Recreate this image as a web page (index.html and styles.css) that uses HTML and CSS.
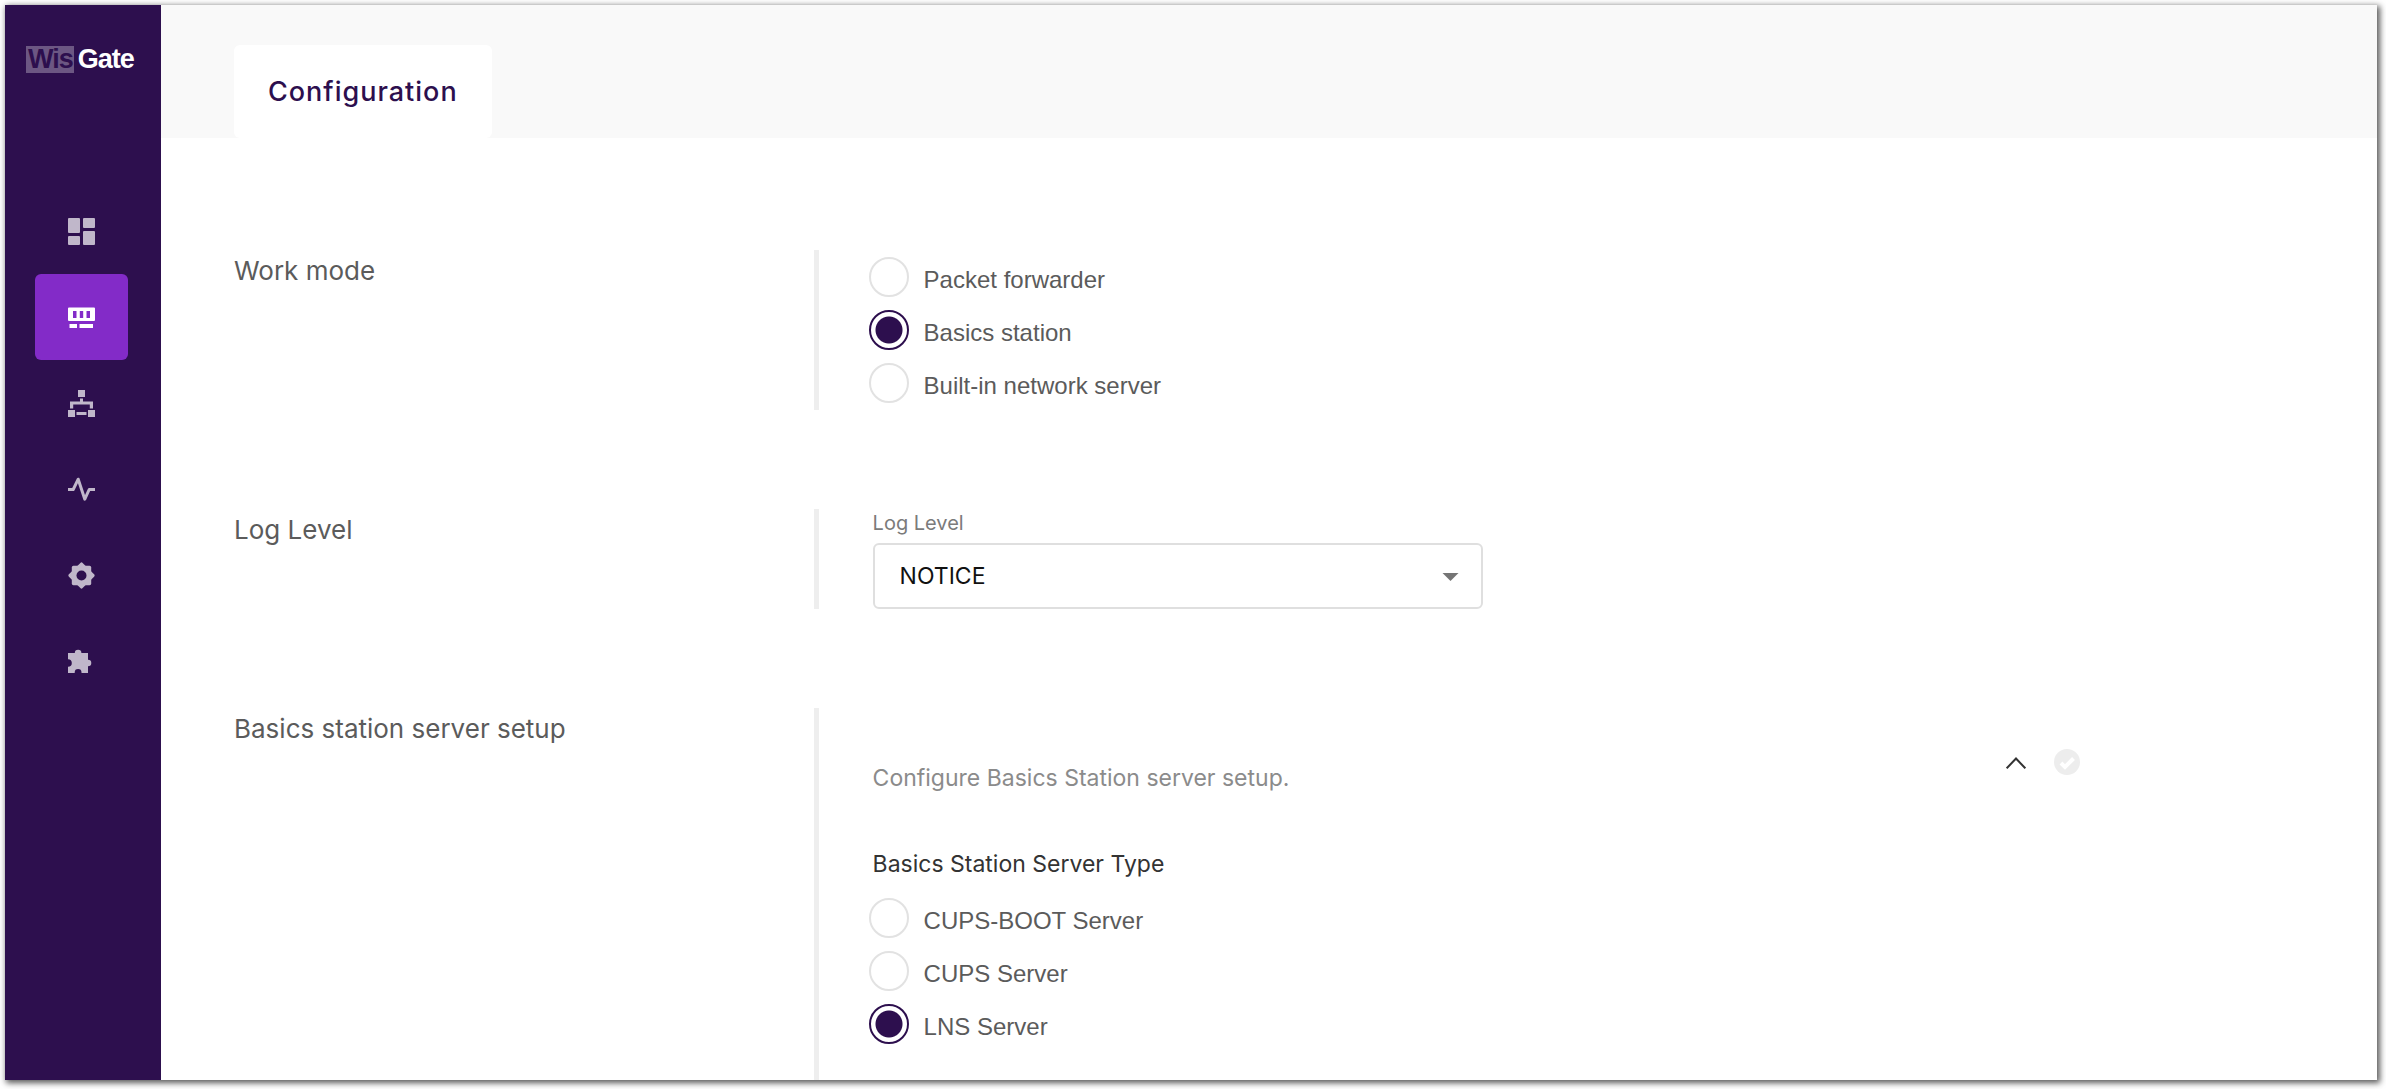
FILE: index.html
```html
<!DOCTYPE html>
<html lang="en">
<head>
<meta charset="utf-8">
<title>WisGate - Configuration</title>
<link rel="stylesheet" href="styles.css">
</head>
<body>
<div class="window">
  <aside class="sidebar">
    <a class="logo" href="#"><span class="logo-wis">Wis</span><span class="logo-gate">Gate</span></a>
    <nav class="nav" aria-label="Main">
      <a class="nav-item" href="#" aria-label="Dashboard">
        <svg class="icon" viewBox="0 0 27 27"><rect width="12" height="15" rx="1"/><rect y="18" width="12" height="9" rx="1"/><rect x="15" width="12" height="10" rx="1"/><rect x="15" y="13" width="12" height="14" rx="1"/></svg>
      </a>
      <a class="nav-item nav-item-active" href="#" aria-label="LoRa network" aria-current="page">
        <svg class="icon" viewBox="0 0 27 27"><path fill-rule="evenodd" d="M1 3.500H26a1 1 0 0 1 1 1V16a1 1 0 0 1-1 1H1a1 1 0 0 1-1-1V4.500a1 1 0 0 1 1-1zM5 7v7h3.500V7zM11.800 7v7h3.400V7zM18.500 7v7H22V7z"/><rect x="1.500" y="20" width="7.500" height="4"/><rect x="11.500" y="20" width="13.500" height="4"/></svg>
      </a>
      <a class="nav-item" href="#" aria-label="Network">
        <svg class="icon" viewBox="0 0 27 27"><path d="M10 0h7v7h-7zM0 20h7v7H0zM20 20h7v7h-7zM8.500 22h10v3h-10zM12 8.500h3v3h10v7h-3.200v-4H5.200v4H2v-7h10z"/></svg>
      </a>
      <a class="nav-item" href="#" aria-label="Diagnostics">
        <svg class="icon" viewBox="0 0 27 27"><path class="stroke" d="M0 13.500H5.200L10.200 3.200 16.800 23.200 21.200 13.500H27"/></svg>
      </a>
      <a class="nav-item" href="#" aria-label="Settings">
        <svg class="icon" viewBox="0 0 27 27"><rect x="3.800" y="3.800" width="19.400" height="19.400" rx="1.600"/><rect x="3.800" y="3.800" width="19.400" height="19.400" rx="1.600" transform="rotate(45 13.500 13.500)"/><circle class="hole" cx="13.500" cy="13.500" r="5"/></svg>
      </a>
      <a class="nav-item" href="#" aria-label="Extensions">
        <svg class="icon" viewBox="0 0 27 27"><path d="M0 5H6.800a3.300 3.300 0 0 1 6.600 0H20v6.700a3.300 3.300 0 0 1 0 6.600V25H13.500V24.500a3.400 3.400 0 0 0-6.800 0V25H0V18.800a3.800 3.800 0 0 0 0-7.600z"/></svg>
      </a>
    </nav>
  </aside>
  <main class="main">
    <header class="tabs">
      <h1 class="tab">Configuration</h1>
    </header>
    <form class="content">
      <section class="row">
        <h2 class="row-title">Work mode</h2>
        <div class="row-body">
          <div class="radios" role="radiogroup" aria-label="Work mode">
            <label class="radio"><input type="radio" name="mode"><span>Packet forwarder</span></label>
            <label class="radio"><input type="radio" name="mode" checked><span>Basics station</span></label>
            <label class="radio"><input type="radio" name="mode"><span>Built-in network server</span></label>
          </div>
        </div>
      </section>
      <section class="row">
        <h2 class="row-title">Log Level</h2>
        <div class="row-body">
          <label class="field-label" for="log-level">Log Level</label>
          <div class="select">
            <select id="log-level"><option>NOTICE</option></select>
            <svg class="select-arrow" viewBox="0 0 16 8"><path d="M0 0h16l-8 8z"/></svg>
          </div>
        </div>
      </section>
      <section class="row row-last">
        <h2 class="row-title">Basics station server setup</h2>
        <div class="row-body">
          <div class="panel-head">
            <p class="description">Configure Basics Station server setup.</p>
            <button class="toggle" type="button" aria-label="Collapse">
              <svg viewBox="0 0 20 12"><path d="M0.700 11.300L10 1.500 19.300 11.300"/></svg>
            </button>
            <svg class="status" viewBox="0 0 26 26"><circle cx="13" cy="13" r="13"/><path d="M7 14l4 4 8.500-8.500"/></svg>
          </div>
          <h3 class="group-title" id="server-type">Basics Station Server Type</h3>
          <div class="radios" role="radiogroup" aria-labelledby="server-type">
            <label class="radio"><input type="radio" name="server"><span>CUPS-BOOT Server</span></label>
            <label class="radio"><input type="radio" name="server"><span>CUPS Server</span></label>
            <label class="radio"><input type="radio" name="server" checked><span>LNS Server</span></label>
          </div>
        </div>
      </section>
    </form>
  </main>
</div>
</body>
</html>
```
FILE: styles.css
```css
* { box-sizing: border-box; }

body {
  margin: 0;
  padding: 5px 9px 9px 5px;
  height: 100vh;
  background: #fff;
  font-family: Inter, sans-serif;
  font-size: 23px;
}

h1, h2, h3, p { margin: 0; font-weight: 400; }

.window {
  display: flex;
  height: 100%;
  overflow: hidden;
  background: #fff;
  box-shadow: 2px 2px 6px 1px rgba(0, 0, 0, .65);
}

.sidebar {
  flex: 0 0 156px;
  background: #2d0f4e;
}

.logo {
  display: flex;
  align-items: center;
  gap: 4px;
  margin: 41px 0 0 21px;
  font: bold 27px/27px "Liberation Sans", sans-serif;
  letter-spacing: -1px;
  text-decoration: none;
}

.logo-wis {
  padding: 0 1px 0 2px;
  background: #6c5783;
  color: #2d0f4e;
}

.logo-gate { color: #fff; }

.nav { margin: 115px 33px 0 30px; }

.nav-item {
  display: flex;
  align-items: center;
  justify-content: center;
  height: 86px;
  border-radius: 6px;
  color: #c0b7ca;
}

.nav-item-active {
  background: #832bc8;
  color: #fff;
}

.icon {
  width: 27px;
  height: 27px;
  fill: currentColor;
}

.stroke {
  fill: none;
  stroke: currentColor;
  stroke-width: 3;
  stroke-linejoin: round;
}

.hole { fill: #2d0f4e; }

.main {
  display: flex;
  flex: 1;
  flex-direction: column;
  min-width: 0;
}

.tabs {
  display: flex;
  padding: 40px 73px 0;
  background: #f9f9f9;
}

.tab {
  padding: 27px 34px 26px;
  border-radius: 6px;
  background: #fff;
  color: #2d0f4e;
  font-size: 27px;
  font-weight: 500;
  line-height: 40px;
  letter-spacing: 1px;
}

.content {
  display: flex;
  flex: 1;
  flex-direction: column;
  gap: 99px;
  padding: 112px 73px 0;
}

.row {
  display: grid;
  grid-template-columns: 280fr 612fr 108fr;
}

.row-last { flex: 1; }

.row-title {
  color: #5b5b5b;
  font-size: 26px;
  line-height: 42px;
}

.row-body {
  padding: 0 0 0 54px;
  border-left: 5px solid #eee;
}

.radios {
  display: grid;
  gap: 13px;
  margin: 0 0 0 -4px;
  padding: 7px 0;
}

.radio {
  display: flex;
  gap: 15px;
  justify-self: start;
  height: 40px;
  color: #5b5b5b;
  font-family: "Liberation Sans", sans-serif;
  font-size: 24px;
  line-height: 46px;
}

.radio input {
  appearance: none;
  flex: none;
  width: 40px;
  height: 40px;
  margin: 0;
  border: 2px solid #e2e2e2;
  border-radius: 50%;
  background: #fff;
}

.radio input:checked {
  border-color: #2d0f4e;
  background: radial-gradient(circle, #2d0f4e 13px, #fff 14px);
}

.field-label {
  display: block;
  margin-bottom: 6px;
  color: #7b7b7b;
  font-size: 20px;
  line-height: 28px;
}

.select {
  position: relative;
  width: 610px;
  max-width: 100%;
}

.select select {
  display: block;
  appearance: none;
  width: 100%;
  height: 66px;
  padding: 0 25px;
  border: 2px solid #dfdfdf;
  border-radius: 6px;
  background: #fff;
  color: #111;
  font: inherit;
}

.select-arrow {
  position: absolute;
  top: 30px;
  right: 24px;
  width: 17px;
  height: 8px;
  fill: #757575;
  pointer-events: none;
}

.panel-head {
  display: flex;
  align-items: flex-start;
  gap: 28px;
  padding-top: 41px;
}

.description {
  flex: 1;
  padding-top: 13px;
  color: #8b8b8b;
  line-height: 32px;
}

.toggle {
  display: flex;
  align-items: center;
  height: 28px;
  padding: 0;
  border: 0;
  background: none;
}

.toggle svg {
  width: 20px;
  height: 12px;
  fill: none;
  stroke: #333;
  stroke-width: 2;
}

.status {
  width: 26px;
  height: 26px;
  fill: #ededed;
}

.status path {
  fill: none;
  stroke: #fff;
  stroke-width: 4;
}

.group-title {
  margin: 54px 0 11px;
  color: #333;
  font-size: 23px;
  line-height: 32px;
}
```
